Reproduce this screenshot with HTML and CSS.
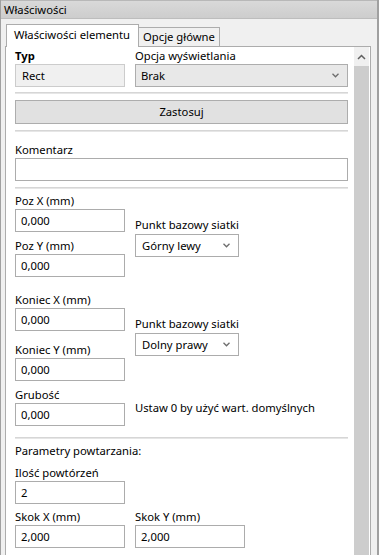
FILE: index.html
```html
<!DOCTYPE html>
<html lang="pl">
<head>
<meta charset="utf-8">
<title>Właściwości</title>
<link rel="stylesheet" href="styles.css">
</head>
<body>
<div class="window">
  <div class="titlebar">Właściwości</div>
  <div class="tabs">
    <div class="tab active">Właściwości elementu</div>
    <div class="tab">Opcje główne</div>
  </div>
  <div class="panel">
    <div class="content">
      <div class="row">
        <div class="field narrow">
          <div class="label bold">Typ</div>
          <div class="box readonly">Rect</div>
        </div>
        <div class="field wide">
          <div class="label">Opcja wyświetlania</div>
          <div class="box select grey">Brak<svg class="chev" width="7" height="5" viewBox="0 0 7 5"><path d="M0.5 0.8 L3.5 3.8 L6.5 0.8" fill="none" stroke="#6d6d6d" stroke-width="1.3"/></svg></div>
        </div>
      </div>
      <div class="sep sep-a"></div>
      <div class="button">Zastosuj</div>
      <div class="sep sep-b"></div>

      <div class="field full komentarz">
        <div class="label">Komentarz</div>
        <div class="box input"></div>
      </div>
      <div class="sep sep-b"></div>

      <div class="group poz">
        <div class="col">
          <div class="label">Poz X (mm)</div>
          <div class="box input">0,000</div>
          <div class="label second">Poz Y (mm)</div>
          <div class="box input">0,000</div>
        </div>
        <div class="col side">
          <div class="label">Punkt bazowy siatki</div>
          <div class="box select small">Górny lewy<svg class="chev" width="7" height="5" viewBox="0 0 7 5"><path d="M0.5 0.8 L3.5 3.8 L6.5 0.8" fill="none" stroke="#6d6d6d" stroke-width="1.3"/></svg></div>
        </div>
      </div>

      <div class="group koniec">
        <div class="col">
          <div class="label">Koniec X (mm)</div>
          <div class="box input">0,000</div>
          <div class="label second wide-gap">Koniec Y (mm)</div>
          <div class="box input">0,000</div>
        </div>
        <div class="col side">
          <div class="label">Punkt bazowy siatki</div>
          <div class="box select small">Dolny prawy<svg class="chev" width="7" height="5" viewBox="0 0 7 5"><path d="M0.5 0.8 L3.5 3.8 L6.5 0.8" fill="none" stroke="#6d6d6d" stroke-width="1.3"/></svg></div>
        </div>
      </div>

      <div class="group grubosc">
        <div class="col">
          <div class="label">Grubość</div>
          <div class="box input">0,000</div>
        </div>
        <div class="hint">Ustaw 0 by użyć wart. domyślnych</div>
      </div>
      <div class="sep sep-c"></div>

      <div class="label params">Parametry powtarzania:</div>
      <div class="col ilosc">
        <div class="label">Ilość powtórzeń</div>
        <div class="box input">2</div>
      </div>
      <div class="group skok">
        <div class="col">
          <div class="label">Skok X (mm)</div>
          <div class="box input">2,000</div>
        </div>
        <div class="col">
          <div class="label">Skok Y (mm)</div>
          <div class="box input">2,000</div>
        </div>
      </div>
    </div>
    <div class="scrollbar">
      <div class="arrow"><svg width="9" height="6" viewBox="0 0 9 6"><path d="M1 5 L4.5 1.5 L8 5" fill="none" stroke="#606060" stroke-width="1.5"/></svg></div>
      <div class="thumb"></div>
    </div>
  </div>
</div>
</body>
</html>
```

FILE: styles.css
```css
* { box-sizing: border-box; }
html, body { margin: 0; padding: 0; background: #f0f0f0; }
body {
  font-family: "Noto Sans", "DejaVu Sans", sans-serif;
  font-size: 11.25px;
  color: #000;
}
.window {
  width: 379px;
  height: 555px;
  overflow: hidden;
  background: #f0f0f0;
  border-left: 1px solid #a0a0a0;
  border-right: 2px solid #a0a0a0;
  display: flex;
  flex-direction: column;
}
.titlebar {
  height: 19px;
  flex: none;
  padding-left: 3px;
  line-height: 17px;
  background: linear-gradient(#d9d9d9, #cdcdcd);
  border-top: 1px solid #b8b8b8;
  border-bottom: 1px solid #bdbdbd;
}
.tabs {
  display: flex;
  align-items: flex-end;
  margin-top: 5px;
  padding-left: 5px;
  height: 22px;
  flex: none;
  position: relative;
  z-index: 1;
}
.tab {
  height: 19px;
  padding: 0 4px 0 4px;
  line-height: 18px;
  border: 1px solid #acacac;
  border-bottom: none;
  background: #f0f0f0;
  margin-left: -1px;
}
.tab.active {
  height: 23px;
  margin-left: 0;
  margin-bottom: -1px;
  padding: 0 8px 0 7px;
  line-height: 19px;
  background: #fff;
  position: relative;
  z-index: 2;
}
.panel {
  margin-left: 4px;
  width: 366px;
  flex: 1;
  display: flex;
  background: #fff;
  border: 1px solid #acacac;
  border-bottom: none;
}
.content {
  width: 347px;
  flex: none;
  padding: 1px 5px 0 9px;
}
.label {
  height: 16px;
  line-height: 16px;
  white-space: nowrap;
}
.bold { font-weight: bold; }
.row, .group {
  display: flex;
  gap: 10px;
}
.field.narrow, .col { width: 110px; }
.field.wide { flex: 1; }
.col { display: flex; flex-direction: column; }
.box {
  height: 23px;
  line-height: 21px;
  padding-left: 5px;
  border: 1px solid #acacac;
  background: #fff;
  white-space: nowrap;
}
.box.readonly {
  background: #f0f0f0;
  border-color: #cccccc;
  padding-left: 6px;
}
.select {
  position: relative;
  padding-left: 5px;
  display: flex;
  align-items: center;
  justify-content: space-between;
  padding-right: 8px;
}
.select.grey {
  background: #e8e8e8;
  border-color: #adadad;
}
.select.small {
  width: 104px;
  margin-top: 1px;
  padding-left: 6px;
}
.chev { flex: none; }
.sep {
  height: 2px;
  background: #d6d6d6;
  border-bottom: 1px solid #e6e6e6;
}
.sep-a { margin-top: 5px; }
.sep-b { margin-top: 6px; }
.sep-c { margin-top: 11px; }
.button {
  margin-top: 6px;
  height: 24px;
  line-height: 22px;
  text-align: center;
  background: #e1e1e1;
  border: 1px solid #adadad;
}
.komentarz { margin-top: 10px; }
.poz { margin-top: 4px; }
.label.second { margin-top: 6px; }
.label.wide-gap { margin-top: 11px; }
.col.side { margin-top: 24px; width: 104px; }
.koniec { margin-top: 15px; }
.grubosc { margin-top: 6px; }
.hint { margin-top: 13px; line-height: 16px; white-space: nowrap; }
.params { margin-top: 4px; }
.ilosc { margin-top: 6px; }
.skok { margin-top: 5px; }
.scrollbar {
  width: 15px;
  flex: none;
  margin-left: 1px;
  display: flex;
  flex-direction: column;
  background: #f0f0f0;
}
.arrow {
  height: 19px;
  display: flex;
  align-items: center;
  justify-content: center;
}
.thumb {
  flex: 1;
  background: #cdcdcd;
}
```
